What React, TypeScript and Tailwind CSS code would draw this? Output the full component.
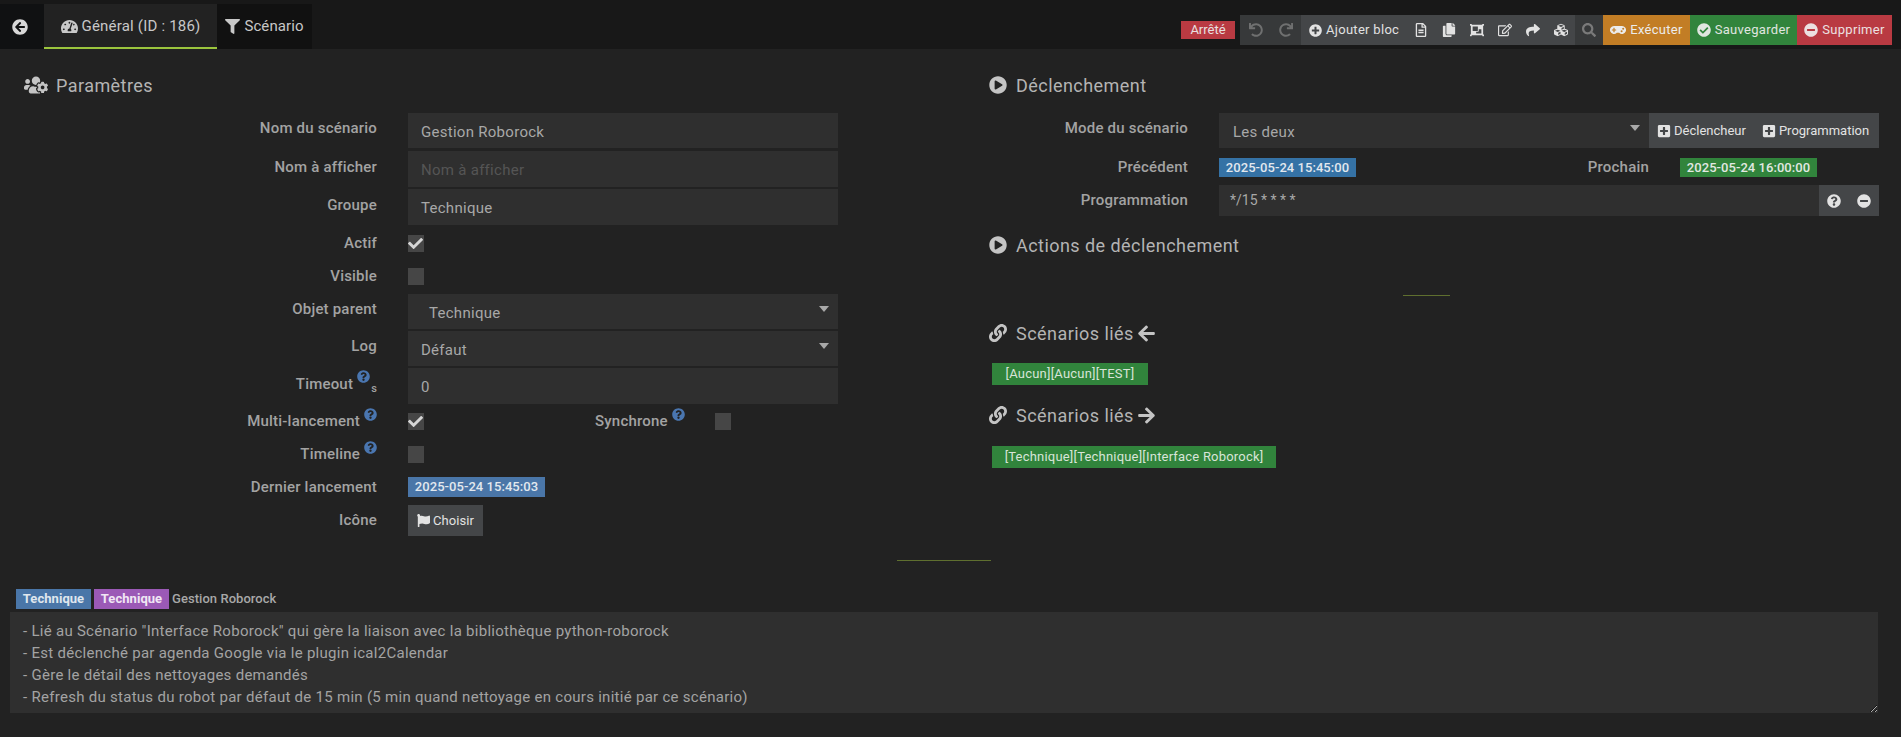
import type { ReactNode } from 'react'
import {
  FaArrowCircleLeft,
  FaArrowLeft,
  FaArrowRight,
  FaCheck,
  FaCheckCircle,
  FaCopy,
  FaCubes,
  FaFilter,
  FaFlag,
  FaGamepad,
  FaLink,
  FaMinusCircle,
  FaObjectGroup,
  FaPlayCircle,
  FaPlusCircle,
  FaPlusSquare,
  FaQuestionCircle,
  FaRedo,
  FaRegEdit,
  FaRegFileAlt,
  FaSearch,
  FaShare,
  FaTachometerAlt,
  FaUndo,
  FaUsersCog,
} from 'react-icons/fa'

function Title({ icon, gap = 'mr-[9px]', children }: { icon: ReactNode; gap?: string; children: ReactNode }) {
  return (
    <div className="flex h-[30px] items-center text-[18px] tracking-[0.45px] text-[#b4b4b4]">
      <span className={`flex text-[#c4c4c4] ${gap}`}>{icon}</span>
      {children}
    </div>
  )
}

function Label({ children, help, className = 'w-[377px]' }: { children: ReactNode; help?: boolean; className?: string }) {
  return (
    <div className={`shrink-0 text-right text-[15px] font-medium tracking-[0.2px] text-[#a3a3a3] ${className}`}>
      {children}
      {help && <Help />}
    </div>
  )
}

function Help() {
  return <FaQuestionCircle className="relative -top-[8px] ml-[4px] inline text-[13px] text-[#4a76b0]" />
}

function Check({ on }: { on?: boolean }) {
  return (
    <div className="relative h-[17px] w-[16px] bg-[#464646]">
      {on && <FaCheck className="absolute left-0 top-[1px] text-[15px] text-[#d6d6d6]" />}
    </div>
  )
}

function Field({ value, placeholder, select, pad = 'pl-[13px]' }: { value?: string; placeholder?: string; select?: boolean; pad?: string }) {
  return (
    <div className={`relative flex h-full w-full items-center bg-[#2f2f2f] pt-[3px] text-[15px] ${pad} ${value ? 'text-[#a8a8a8]' : 'text-[#555555]'}`}>
      {value ?? placeholder}
      {select && <span className="absolute right-[9px] top-[12px] h-0 w-0 border-x-[5px] border-t-[6px] border-x-transparent border-t-[#a8a8a8]" />}
    </div>
  )
}

export default function App() {
  return (
    <div className="min-h-[737px] bg-[#222222] font-[Roboto,sans-serif] tracking-[0.28px] text-[#a8a8a8]">
      {/* barre du haut */}
      <div className="flex h-[49px] justify-between bg-[#181818] pt-[4px]">
        <div className="flex h-[45px]">
          <div className="flex w-[44px] items-center justify-center bg-[#101112] pr-[5px] text-[#d8d8d8]">
            <FaArrowCircleLeft className="text-[16px]" />
          </div>
          <div className="flex w-[173px] items-center justify-center gap-[4px] border-b-2 border-[#9bc53d] bg-[#222222] pt-[1px] text-[15px] tracking-[0.2px] text-[#c8c8c8]">
            <FaTachometerAlt className="text-[17px]" />
            Général (ID : 186)
          </div>
          <div className="flex w-[95px] items-center justify-center gap-[4px] bg-[#111111] text-[15px] tracking-[0.1px] text-[#c8c8c8]">
            <FaFilter className="text-[15px]" />
            Scénario
          </div>
        </div>
        <div className="mr-[9px] mt-[11px] flex h-[30px] items-start whitespace-nowrap text-[13px] tracking-[0.3px]">
          <div className="mr-[5px] mt-[6px] flex h-[18px] w-[54px] items-center justify-center bg-[#b93a42] tracking-normal text-[#e8e0e0]">
            Arrêté
          </div>
          <div className="flex h-full w-[61px] items-center gap-[16px] bg-[#37393a] pl-[9px] text-[14px] text-[#6f7070]">
            <FaUndo />
            <FaRedo />
          </div>
          <div className="flex h-full w-[274px] items-center bg-[#444648] pl-[8px] text-[#e2e2e2]">
            <FaPlusCircle className="mr-[4px] text-[13px]" />
            Ajouter bloc
            <div className="ml-[15px] flex items-center gap-[14px] text-[14px]">
              <FaRegFileAlt />
              <FaCopy />
              <FaObjectGroup />
              <FaRegEdit />
              <FaShare />
              <FaCubes />
            </div>
          </div>
          <div className="flex h-full w-[28px] items-center justify-center bg-[#37393a] text-[14px] text-[#7a7a7a]">
            <FaSearch />
          </div>
          <div className="flex h-full w-[87px] items-center justify-center gap-[4px] bg-[#c27d25] text-[#ececec]">
            <FaGamepad className="text-[16px]" />
            Exécuter
          </div>
          <div className="flex h-full w-[107px] items-center justify-center gap-[4px] bg-[#31843c] text-[#e0e6e0]">
            <FaCheckCircle className="text-[14px]" />
            Sauvegarder
          </div>
          <div className="flex h-full w-[95px] items-center justify-center gap-[4px] bg-[#b93a42] text-[#ece0e0]">
            <FaMinusCircle className="text-[14px]" />
            Supprimer
          </div>
        </div>
      </div>

      <div className="flex">
        {/* colonne gauche */}
        <div className="w-[989px] shrink-0">
          <div className="ml-[24px] mt-[21px]">
            <Title gap="mr-2" icon={<FaUsersCog className="text-[24px]" />}>Paramètres</Title>
          </div>
          <div className="mt-[13px] flex h-[35px] items-center">
            <Label className="w-[377px] pb-1">Nom du scénario</Label>
            <div className="ml-[31px] h-full w-[430px]"><Field value="Gestion Roborock" /></div>
          </div>
          <div className="mt-[3px] flex h-[36px] items-center">
            <Label className="w-[377px] pb-1">Nom à afficher</Label>
            <div className="ml-[31px] h-full w-[430px]"><Field placeholder="Nom à afficher" /></div>
          </div>
          <div className="mt-[2px] flex h-[36px] items-center">
            <Label className="w-[377px] pb-1">Groupe</Label>
            <div className="ml-[31px] h-full w-[430px]"><Field value="Technique" /></div>
          </div>
          <div className="mt-[10px] flex h-[17px] items-center">
            <Label>Actif</Label>
            <div className="ml-[31px]"><Check on /></div>
          </div>
          <div className="mt-[16px] flex h-[17px] items-center">
            <Label>Visible</Label>
            <div className="ml-[31px]"><Check /></div>
          </div>
          <div className="mt-[9px] flex h-[35px] items-center">
            <Label className="w-[377px] pb-1">Objet parent</Label>
            <div className="ml-[31px] h-full w-[430px]"><Field value="Technique" select pad="pl-[21px]" /></div>
          </div>
          <div className="mt-[2px] flex h-[35px] items-center">
            <Label className="w-[377px] pb-1">Log</Label>
            <div className="ml-[31px] h-full w-[430px]"><Field value="Défaut" select /></div>
          </div>
          <div className="mt-[2px] flex h-[36px] items-center">
            <Label className="w-[377px] pb-1">
              Timeout
              <Help />
              <sub className="ml-[1px] text-[11px]">s</sub>
            </Label>
            <div className="ml-[31px] h-full w-[430px]"><Field value="0" /></div>
          </div>
          <div className="mt-[9px] flex h-[17px] items-center">
            <Label help>Multi-lancement</Label>
            <div className="ml-[31px]"><Check on /></div>
            <div className="ml-[171px] w-[88px] whitespace-nowrap text-[15px] font-medium tracking-[0.2px] text-[#a3a3a3]">
              Synchrone
              <Help />
            </div>
            <div className="ml-[32px]"><Check /></div>
          </div>
          <div className="mt-[16px] flex h-[17px] items-center">
            <Label help>Timeline</Label>
            <div className="ml-[31px]"><Check /></div>
          </div>
          <div className="mt-[14px] flex h-[20px] items-center">
            <Label>Dernier lancement</Label>
            <div className="ml-[31px] flex h-full w-[137px] items-center justify-center bg-[#4a76a8] text-[13px] font-medium tracking-[0.05px] text-[#e2e8ee]">
              2025-05-24 15:45:03
            </div>
          </div>
          <div className="mt-[8px] flex h-[31px] items-center">
            <Label>Icône</Label>
            <div className="ml-[31px] flex h-full w-[75px] items-center justify-center gap-[3px] bg-[#444648] text-[13px] tracking-[0.1px] text-[#e2e2e2]">
              <FaFlag className="text-[13px]" />
              Choisir
            </div>
          </div>
        </div>

        {/* colonne droite */}
        <div className="w-[890px] shrink-0">
          <div className="mt-[21px]">
            <Title icon={<FaPlayCircle className="text-[18px]" />}>Déclenchement</Title>
          </div>
          <div className="mt-[13px] flex h-[35px] items-center">
            <Label className="w-[199px] pb-1">Mode du scénario</Label>
            <div className="ml-[31px] flex h-full w-[660px]">
              <div className="w-[430px]"><Field value="Les deux" select pad="pl-[14px]" /></div>
              <div className="flex flex-1 items-center gap-[16px] bg-[#444648] pl-[8px] text-[13px] tracking-normal text-[#e2e2e2]">
                <span className="flex items-center gap-[3px]"><FaPlusSquare className="text-[14px]" />Déclencheur</span>
                <span className="flex items-center gap-[3px]"><FaPlusSquare className="text-[14px]" />Programmation</span>
              </div>
            </div>
          </div>
          <div className="mt-[10px] flex h-[19px] items-center">
            <Label className="w-[199px]">Précédent</Label>
            <div className="ml-[31px] flex w-[430px] items-center justify-between">
              <div className="flex h-[19px] w-[137px] items-center justify-center bg-[#3572a5] text-[13px] font-medium tracking-[0.05px] text-[#e2e8ee]">
                2025-05-24 15:45:00
              </div>
              <span className="text-[15px] font-medium tracking-[0.2px] text-[#a3a3a3]">Prochain</span>
            </div>
            <div className="ml-[31px] flex h-[19px] w-[137px] items-center justify-center bg-[#31843c] text-[13px] font-medium tracking-[0.05px] text-[#e2e8e2]">
              2025-05-24 16:00:00
            </div>
          </div>
          <div className="mt-[8px] flex h-[31px] items-center">
            <Label className="w-[199px]">Programmation</Label>
            <div className="ml-[31px] flex h-full w-[660px]">
              <div className="flex w-[600px] items-center bg-[#2f2f2f] pl-[11px] text-[14px] tracking-normal text-[#a8a8a8]">*/15 * * * *</div>
              <div className="flex flex-1 items-center justify-center gap-[16px] bg-[#444648] text-[14px] text-[#e2e2e2]">
                <FaQuestionCircle />
                <FaMinusCircle />
              </div>
            </div>
          </div>
          <div className="mt-[14px]">
            <Title icon={<FaPlayCircle className="text-[18px]" />}>Actions de déclenchement</Title>
          </div>
          <div className="ml-[414px] mt-[35px] h-px w-[47px] bg-[#5f6f2f]" />
          <div className="mt-[22px]">
            <Title icon={<FaLink className="text-[18px]" />}>
              Scénarios liés
              <FaArrowLeft className="ml-[3px] text-[19px] text-[#c4c4c4]" />
            </Title>
          </div>
          <div className="ml-[3px] mt-[15px] flex h-[22px] w-[156px] items-center justify-center bg-[#31843c] text-[13px] tracking-[0.2px] text-[#d8e4d8]">
            [Aucun][Aucun][TEST]
          </div>
          <div className="mt-[15px]">
            <Title icon={<FaLink className="text-[18px]" />}>
              Scénarios liés
              <FaArrowRight className="ml-[3px] text-[19px] text-[#c4c4c4]" />
            </Title>
          </div>
          <div className="ml-[3px] mt-[16px] flex h-[22px] w-[284px] items-center justify-center bg-[#31843c] text-[13px] tracking-[0.2px] text-[#d8e4d8]">
            [Technique][Technique][Interface Roborock]
          </div>
        </div>
      </div>

      <div className="ml-[897px] mt-[24px] h-px w-[94px] bg-[#5f6f2f]" />

      <div className="ml-[16px] mt-[28px] flex h-[20px] items-center tracking-[0.05px]">
        <span className="flex h-full w-[75px] items-center justify-center bg-[#4a76a8] text-[13px] font-bold text-[#dfe6ee]">Technique</span>
        <span className="ml-[3px] flex h-full w-[75px] items-center justify-center bg-[#9b59b6] text-[13px] font-bold text-[#f0e6f4]">Technique</span>
        <span className="ml-[3px] text-[13px] font-medium text-[#a8a8a8]">Gestion Roborock</span>
      </div>
      <textarea
        readOnly
        className="ml-[10px] mt-[3px] block h-[101px] w-[1868px] bg-[#2f2f2f] px-[13px] py-[8px] text-[15px] leading-[22px] text-[#a3a3a3] outline-none"
        defaultValue={`- Lié au Scénario "Interface Roborock" qui gère la liaison avec la bibliothèque python-roborock
- Est déclenché par agenda Google via le plugin ical2Calendar
- Gère le détail des nettoyages demandés
- Refresh du status du robot par défaut de 15 min (5 min quand nettoyage en cours initié par ce scénario)`}
      />
    </div>
  )
}
